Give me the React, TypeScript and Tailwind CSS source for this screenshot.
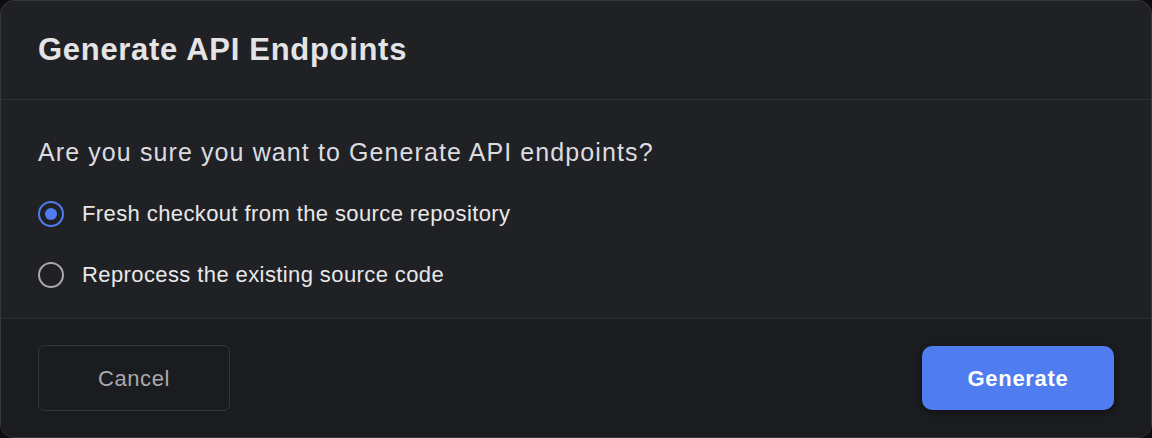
import { useState } from 'react'

const options = [
  { id: 'fresh', label: 'Fresh checkout from the source repository' },
  { id: 'reprocess', label: 'Reprocess the existing source code' },
]

function Radio({ checked }: { checked: boolean }) {
  return checked ? (
    <span className="flex h-[26px] w-[26px] shrink-0 items-center justify-center rounded-full border-[2.5px] border-[#4f7df0]">
      <span className="h-[12px] w-[12px] rounded-full bg-[#4f7df0]" />
    </span>
  ) : (
    <span className="h-[26px] w-[26px] shrink-0 rounded-full border-[2.5px] border-[#a8a8ab]" />
  )
}

export default function App() {
  const [choice, setChoice] = useState('fresh')

  return (
    <div className="h-[438px] w-[1152px] bg-[#0d0d0f] font-['Liberation_Sans',Arial,sans-serif]">
      <div className="flex h-full w-full flex-col overflow-hidden rounded-[14px] border border-[#37383c] bg-[#202125]">
        <div className="flex h-[99px] shrink-0 items-center border-b border-[#2f3034] px-[37px]">
          <h1 className="text-[31px] font-bold tracking-[0.7px] text-[#e4e4e7]">Generate API Endpoints</h1>
        </div>

        <div className="flex flex-1 flex-col px-[37px] pt-[36px]">
          <p className="text-[25px] leading-[32px] tracking-[1.1px] text-[#dcdce0]">
            Are you sure you want to Generate API endpoints?
          </p>
          <div className="mt-[32px] flex flex-col gap-[33px]">
            {options.map((o) => (
              <label
                key={o.id}
                className="flex cursor-pointer items-center gap-[18px] text-[22px] leading-[28px] tracking-[0.4px] text-[#e8e8ea]"
                onClick={() => setChoice(o.id)}
              >
                <Radio checked={choice === o.id} />
                {o.label}
              </label>
            ))}
          </div>
        </div>

        <div className="flex h-[119px] shrink-0 items-center justify-between border-t border-[#2f3034] bg-[#1b1c1f] px-[37px]">
          <button className="h-[66px] w-[192px] rounded-[6px] border border-[#35363a] text-[22px] tracking-[0.6px] text-[#a9a9ad]">
            Cancel
          </button>
          <button className="h-[64px] w-[192px] rounded-[10px] bg-[#4f7cef] text-[22px] font-bold tracking-[0.7px] text-white shadow-[0_2px_6px_rgba(0,0,0,0.45)]">
            Generate
          </button>
        </div>
      </div>
    </div>
  )
}
